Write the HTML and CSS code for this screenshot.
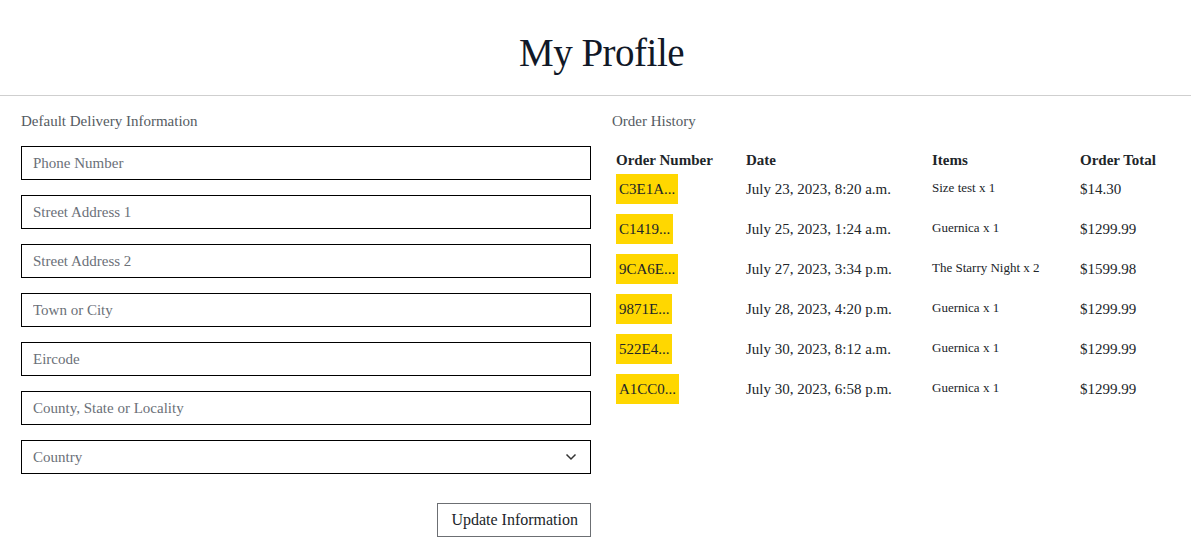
FILE: index.html
```html
<!DOCTYPE html>
<html lang="en">
<head>
<meta charset="utf-8">
<title>My Profile</title>
<link rel="stylesheet" href="styles.css">
</head>
<body>
<header class="page-header">
  <h1 class="page-title">My Profile</h1>
</header>
<main class="profile">
  <section class="delivery">
    <p class="section-label">Default Delivery Information</p>
    <form class="delivery-form">
      <input class="field" type="text" placeholder="Phone Number">
      <input class="field" type="text" placeholder="Street Address 1">
      <input class="field" type="text" placeholder="Street Address 2">
      <input class="field" type="text" placeholder="Town or City">
      <input class="field" type="text" placeholder="Eircode">
      <input class="field" type="text" placeholder="County, State or Locality">
      <div class="select-wrap">
        <select class="field select">
          <option>Country</option>
        </select>
        <svg class="chevron" width="12" height="8" viewBox="0 0 12 8"><path d="M1.5 1.5 L6 6 L10.5 1.5" fill="none" stroke="#333" stroke-width="1.5"/></svg>
      </div>
      <div class="actions">
        <button class="btn-update" type="button">Update Information</button>
      </div>
    </form>
  </section>
  <section class="history">
    <p class="section-label">Order History</p>
    <table class="orders">
      <thead>
        <tr><th class="c1">Order Number</th><th class="c2">Date</th><th class="c3">Items</th><th class="c4">Order Total</th></tr>
      </thead>
      <tbody>
        <tr><td><a class="order-no">C3E1A...</a></td><td>July 23, 2023, 8:20 a.m.</td><td class="items">Size test x 1</td><td>$14.30</td></tr>
        <tr><td><a class="order-no">C1419...</a></td><td>July 25, 2023, 1:24 a.m.</td><td class="items">Guernica x 1</td><td>$1299.99</td></tr>
        <tr><td><a class="order-no">9CA6E...</a></td><td>July 27, 2023, 3:34 p.m.</td><td class="items">The Starry Night x 2</td><td>$1599.98</td></tr>
        <tr><td><a class="order-no">9871E...</a></td><td>July 28, 2023, 4:20 p.m.</td><td class="items">Guernica x 1</td><td>$1299.99</td></tr>
        <tr><td><a class="order-no">522E4...</a></td><td>July 30, 2023, 8:12 a.m.</td><td class="items">Guernica x 1</td><td>$1299.99</td></tr>
        <tr><td><a class="order-no">A1CC0...</a></td><td>July 30, 2023, 6:58 p.m.</td><td class="items">Guernica x 1</td><td>$1299.99</td></tr>
      </tbody>
    </table>
  </section>
</main>
</body>
</html>
```

FILE: styles.css
```css
* { box-sizing: border-box; }
html, body { margin: 0; padding: 0; }
body {
  font-family: "Liberation Serif", "DejaVu Serif", serif;
  color: #212529;
  background: #fff;
  font-size: 15px;
}
.page-header {
  height: 96px;
  border-bottom: 1px solid #cfcfcf;
  display: flex;
  justify-content: center;
  align-items: flex-start;
}
.page-title {
  margin: 30px 0 0 12px;
  font-size: 39px;
  font-weight: 400;
  line-height: 46px;
  color: #111827;
  letter-spacing: -0.5px;
}
.profile {
  display: flex;
  gap: 21px;
  padding: 0 0 0 21px;
}
.delivery { width: 570px; flex: none; }
.history { flex: 1; }
.section-label {
  margin: 15px 0 0;
  height: 20px;
  line-height: 20px;
  font-size: 15px;
  color: #555b62;
}
.delivery-form {
  display: flex;
  flex-direction: column;
  gap: 15px;
  margin-top: 15px;
}
.field {
  display: block;
  width: 100%;
  height: 34px;
  border: 1px solid #000;
  border-radius: 0;
  padding: 0 11px;
  font-family: inherit;
  font-size: 15px;
  color: #212529;
  background: #fff;
  outline: none;
}
.field::placeholder { color: #6b7078; }
.select-wrap { position: relative; }
.select {
  appearance: none;
  -webkit-appearance: none;
  color: #6b7078;
}
.chevron {
  position: absolute;
  right: 14px;
  top: 13px;
  pointer-events: none;
}
.actions {
  display: flex;
  justify-content: flex-end;
  margin-top: 14px;
}
.btn-update {
  height: 34px;
  padding: 0 12px 0 13px;
  border: 1px solid #6c6f73;
  background: #fff;
  font-family: inherit;
  font-size: 16px;
  color: #212529;
  border-radius: 0;
}
.orders {
  border-collapse: collapse;
  margin-top: 16px;
  table-layout: fixed;
  width: 575px;
}
.orders th {
  text-align: left;
  font-weight: 700;
  font-size: 15px;
  padding: 5px 4px 0;
  height: 27px;
  vertical-align: top;
  color: #212529;
}
.orders th.c1 { width: 130px; }
.orders th.c2 { width: 186px; }
.orders th.c3 { width: 148px; }
.orders td {
  padding: 0 4px;
  height: 40px;
  vertical-align: top;
  font-size: 15px;
  line-height: 30px;
  white-space: nowrap;
}
.orders td.items { font-size: 13px; line-height: 28px; }
.order-no {
  display: inline-block;
  background: #ffd700;
  color: #212529;
  padding: 0 3px;
  height: 30px;
  line-height: 30px;
  text-decoration: none;
}
```
